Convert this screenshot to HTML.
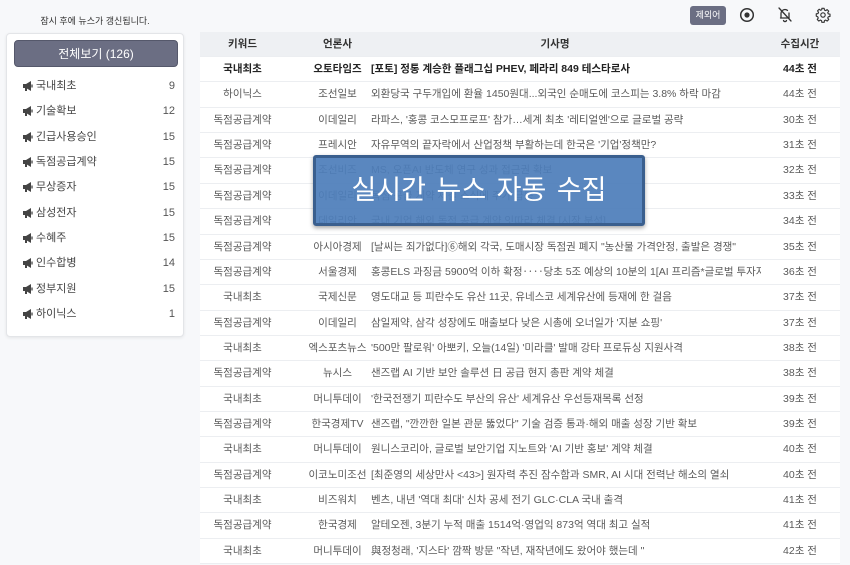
<!DOCTYPE html>
<html><head><meta charset="utf-8">
<style>
*{margin:0;padding:0;box-sizing:border-box}
body{width:850px;height:565px;overflow:hidden;background:#f7f8fa;font-family:"Liberation Sans","Noto Sans CJK KR",sans-serif;color:#333;position:relative}
.top{position:absolute;left:0;top:14px;width:190px;text-align:center;font-size:9px;color:#333}
.panel{position:absolute;left:6px;top:33px;width:178px;height:304px;background:#fff;border:1px solid #e3e5e8;border-radius:4px;box-shadow:0 1px 3px rgba(0,0,0,.08)}
.allbtn{position:absolute;left:7px;top:6px;width:164px;height:27px;background:#6b6e83;border:1px solid #55586b;border-radius:4px;color:#fff;font-size:12px;text-align:center;line-height:26px}
.item{position:absolute;left:22px;width:153px;font-size:11px;color:#444;height:20px;line-height:20px}
.item span{position:absolute;right:0;top:0;color:#555}
.item svg{vertical-align:-2px;margin-right:2px}
.ex{position:absolute;left:690px;top:6px;width:36px;height:19px;background:#6b6e83;border-radius:3px;color:#fff;font-size:9px;text-align:center;line-height:19px}
.tbl{position:absolute;left:200px;top:32px;width:640px;background:#fff}
.row{position:relative;height:25.37px;border-bottom:1px solid #eceef1;font-size:10.5px;color:#5a5a5a}
.row div{position:absolute;top:0;line-height:25px;white-space:nowrap;overflow:hidden}
.c1{left:0;width:85px;text-align:center}
.c2{left:90px;width:95px;text-align:center}
.c3{left:171px;width:390px}
.c4{left:560px;width:80px;text-align:center}
.hd{background:#eef0f3;color:#333;font-weight:bold;height:25px}
.hd .c3{text-align:center;width:350px;left:180px}
.b{color:#222;font-weight:bold}
.ov{position:absolute;left:313px;top:155px;width:332px;height:71px;background:rgba(78,126,186,.93);border:3px solid #3a5f8e;border-radius:3px;box-shadow:0 2px 4px rgba(0,0,0,.35);color:#fff;font-size:27px;text-align:center;line-height:64px;word-spacing:3px}
</style></head><body>
<div class="top">잠시 후에 뉴스가 갱신됩니다.</div>
<div class="panel">
<div class="allbtn">전체보기 (126)</div>
</div>
<div id="items"></div>
<div class="ex">제외어</div>
<svg style="position:absolute;left:739px;top:7px" width="16" height="16" viewBox="0 0 16 16"><circle cx="8" cy="8" r="6.3" fill="none" stroke="#333" stroke-width="1.5"/><circle cx="8" cy="8" r="2.6" fill="#333"/></svg>
<svg style="position:absolute;left:777px;top:6px" width="16" height="17" viewBox="0 0 16 17"><path d="M4 12V7.5a4 4 0 0 1 6.5-3.1M12 7v5H3.5M6.5 14.5a1.6 1.6 0 0 0 3 0M2 2l12 13" fill="none" stroke="#333" stroke-width="1.3" stroke-linecap="round"/></svg>
<svg style="position:absolute;left:815px;top:7px" width="16" height="16" viewBox="0 0 24 24"><path d="M10.3 2h3.4l.5 2.6 1.8.8 2.2-1.5 2.4 2.4-1.5 2.2.8 1.8 2.6.5v3.4l-2.6.5-.8 1.8 1.5 2.2-2.4 2.4-2.2-1.5-1.8.8-.5 2.6h-3.4l-.5-2.6-1.8-.8-2.2 1.5-2.4-2.4 1.5-2.2-.8-1.8L1.9 13.7v-3.4l2.6-.5.8-1.8-1.5-2.2 2.4-2.4 2.2 1.5 1.8-.8z" fill="none" stroke="#333" stroke-width="1.7" stroke-linejoin="round"/><circle cx="12" cy="12" r="3.3" fill="none" stroke="#333" stroke-width="1.7"/></svg>
<div class="tbl" id="tbl">
<div class="row hd"><div class="c1">키워드</div><div class="c2">언론사</div><div class="c3">기사명</div><div class="c4">수집시간</div></div>
</div>
<div class="ov">실시간 뉴스 자동 수집</div>
<script>
var items=[["국내최초",9],["기술확보",12],["긴급사용승인",15],["독점공급계약",15],["무상증자",15],["삼성전자",15],["수혜주",15],["인수합병",14],["정부지원",15],["하이닉스",1]];
var ico='<svg width="12" height="10" viewBox="0 0 12 10"><path d="M1 3h3l5-3v10L4 7H1z" fill="#444"/><rect x="3" y="7" width="2" height="3" fill="#444"/><path d="M10 3.5v3" stroke="#444" stroke-width="1.3"/></svg>';
var h='';items.forEach(function(it,i){h+='<div class="item" style="top:'+(76+i*25.35)+'px">'+ico+it[0]+'<span>'+it[1]+'</span></div>'});
document.getElementById('items').innerHTML=h;
var rows=[
["국내최초","오토타임즈","[포토] 정통 계승한 플래그십 PHEV, 페라리 849 테스타로사","44초 전"],
["하이닉스","조선일보","외환당국 구두개입에 환율 1450원대...외국인 순매도에 코스피는 3.8% 하락 마감","44초 전"],
["독점공급계약","이데일리","라파스, '홍콩 코스모프로프' 참가…세계 최초 '레티얼엔'으로 글로벌 공략","30초 전"],
["독점공급계약","프레시안","자유무역의 끝자락에서 산업정책 부활하는데 한국은 '기업'정책만?","31초 전"],
["독점공급계약","조선비즈","MS, 오픈AI 반도체 연구 성과 접근권 확보","32초 전"],
["독점공급계약","이데일리","독점 공급 계약 체결 소식에 주가 급등","33초 전"],
["독점공급계약","데일리안","국내 기업 해외 독점 공급 계약 잇따라 체결 [시장 분석]","34초 전"],
["독점공급계약","아시아경제","[날씨는 죄가없다]⑥해외 각국, 도매시장 독점권 폐지 \"농산물 가격안정, 출발은 경쟁\"","35초 전"],
["독점공급계약","서울경제","홍콩ELS 과징금 5900억 이하 확정‥‥당초 5조 예상의 10분의 1[AI 프리즘*글로벌 투자자 뉴스]","36초 전"],
["국내최초","국제신문","영도대교 등 피란수도 유산 11곳, 유네스코 세계유산에 등재에 한 걸음","37초 전"],
["독점공급계약","이데일리","삼일제약, 삼각 성장에도 매출보다 낮은 시총에 오너일가 '지분 쇼핑'","37초 전"],
["국내최초","엑스포츠뉴스","'500만 팔로워' 아뽀키, 오늘(14일) '미라클' 발매 강타 프로듀싱 지원사격","38초 전"],
["독점공급계약","뉴시스","샌즈랩 AI 기반 보안 솔루션 日 공급 현지 총판 계약 체결","38초 전"],
["국내최초","머니투데이","'한국전쟁기 피란수도 부산의 유산' 세계유산 우선등재목록 선정","39초 전"],
["독점공급계약","한국경제TV","샌즈랩, \"깐깐한 일본 관문 뚫었다\" 기술 검증 통과·해외 매출 성장 기반 확보","39초 전"],
["국내최초","머니투데이","원니스코리아, 글로벌 보안기업 지노트와 'AI 기반 홍보' 계약 체결","40초 전"],
["독점공급계약","이코노미조선","[최준영의 세상만사 <43>] 원자력 추진 잠수함과 SMR, AI 시대 전력난 해소의 열쇠","40초 전"],
["국내최초","비즈워치","벤츠, 내년 '역대 최대' 신차 공세 전기 GLC·CLA 국내 출격","41초 전"],
["독점공급계약","한국경제","알테오젠, 3분기 누적 매출 1514억·영업익 873억 역대 최고 실적","41초 전"],
["국내최초","머니투데이","與정청래, '지스타' 깜짝 방문 \"작년, 재작년에도 왔어야 했는데 \"","42초 전"]];
var t='';rows.forEach(function(r,i){t+='<div class="row'+(i==0?' b':'')+'"><div class="c1">'+r[0]+'</div><div class="c2">'+r[1]+'</div><div class="c3">'+r[2]+'</div><div class="c4">'+r[3]+'</div></div>'});
document.getElementById('tbl').innerHTML+=t;
</script>
</body></html>
